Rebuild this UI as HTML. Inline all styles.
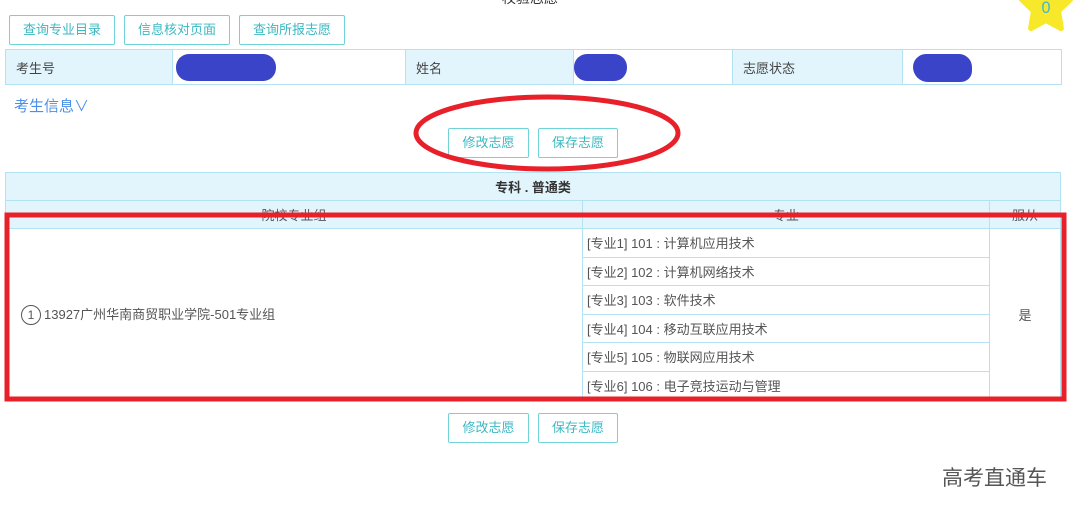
<!DOCTYPE html>
<html><head><meta charset="utf-8"><style>
*{margin:0;padding:0;box-sizing:border-box}
body{width:1080px;height:515px;background:#fff;position:relative;overflow:hidden;font-family:"Liberation Sans","Noto Sans CJK SC",sans-serif;font-size:13px;color:#555}
.a{position:absolute}
.btn{position:absolute;height:30px;border:1px solid #6fd3d8;border-radius:2px;color:#3bb8c2;font-size:13px;text-align:center;line-height:28px;background:#fff}
table{border-collapse:collapse;position:absolute}
td{border:1px solid #b3e3f2}
.lb{background:#e3f5fc;padding-left:10px;color:#444}
</style></head><body>
<div class="a" style="left:502px;top:-12px;font-size:14px;color:#333">校验志愿</div>
<div class="btn" style="left:9px;top:15px;width:106px">查询专业目录</div>
<div class="btn" style="left:124px;top:15px;width:106px">信息核对页面</div>
<div class="btn" style="left:239px;top:15px;width:106px">查询所报志愿</div>
<svg class="a" style="left:1016px;top:-18px" width="60" height="52" viewBox="0 0 50 45"><polygon points="25,0 31.5,13 46,15 35.5,25 38,40 25,33 12,40 14.5,25 4,15 18.5,13" fill="#f7e82a" stroke="#f7e82a" stroke-width="5" stroke-linejoin="round"/><text x="25" y="27" text-anchor="middle" font-size="14" fill="#3fb8d0" font-family="Liberation Sans">0</text></svg>
<table style="left:5px;top:49px;width:1057px;height:36px;font-size:13px">
<tr><td class="lb" style="width:167px">考生号</td><td style="width:233px"></td><td class="lb" style="width:168px">姓名</td><td style="width:159px"></td><td class="lb" style="width:170px">志愿状态</td><td></td></tr></table>
<div class="a" style="left:176px;top:54px;width:100px;height:27px;border-radius:13px;background:#3a44c8"></div>
<div class="a" style="left:574px;top:54px;width:53px;height:27px;border-radius:13px;background:#3a44c8"></div>
<div class="a" style="left:913px;top:54px;width:59px;height:28px;border-radius:14px 14px 12px 16px;background:#3a44c8"></div>
<div class="a" style="left:14px;top:95px;font-size:15px;color:#4b8fe6">考生信息∨</div>
<div class="btn" style="left:448px;top:128px;width:81px">修改志愿</div>
<div class="btn" style="left:538px;top:128px;width:80px">保存志愿</div>
<table style="left:5px;top:172px;width:1056px;font-size:13px">
<tr style="height:28px;background:#e3f5fc"><td colspan="3" style="text-align:center;font-weight:bold;color:#333">专科 . 普通类</td></tr>
<tr style="height:28px;background:#e3f5fc;text-align:center"><td style="width:577px">院校专业组</td><td style="width:407px">专业</td><td>服从</td></tr>
<tr style="height:28.5px"><td rowspan="6" style="padding-left:15px"><span style="display:inline-block;width:20px;height:20px;border:1px solid #555;border-radius:50%;text-align:center;line-height:18px;font-size:12px;margin-right:3px">1</span>13927广州华南商贸职业学院-501专业组</td><td style="padding-left:4px">[专业1] 101 : 计算机应用技术</td><td rowspan="6" style="text-align:center">是</td></tr>
<tr style="height:28.5px"><td style="padding-left:4px">[专业2] 102 : 计算机网络技术</td></tr>
<tr style="height:28.5px"><td style="padding-left:4px">[专业3] 103 : 软件技术</td></tr>
<tr style="height:28.5px"><td style="padding-left:4px">[专业4] 104 : 移动互联应用技术</td></tr>
<tr style="height:28.5px"><td style="padding-left:4px">[专业5] 105 : 物联网应用技术</td></tr>
<tr style="height:28.5px"><td style="padding-left:4px">[专业6] 106 : 电子竞技运动与管理</td></tr>
</table>
<svg class="a" style="left:0;top:0" width="1080" height="515"><ellipse cx="547" cy="133" rx="131" ry="36" fill="none" stroke="#e8202a" stroke-width="5"/><rect x="7" y="215" width="1057" height="184" fill="none" stroke="#e8202a" stroke-width="5"/></svg>
<div class="btn" style="left:448px;top:413px;width:81px">修改志愿</div>
<div class="btn" style="left:538px;top:413px;width:80px">保存志愿</div>
<div class="a" style="left:942px;top:462px;font-size:21px;color:#555">高考直通车</div>
</body></html>
